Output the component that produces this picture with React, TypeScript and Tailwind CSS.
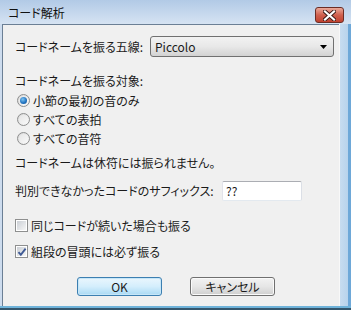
import React from "react";

const font = "[font-family:'Noto_Sans_CJK_JP','Noto_Sans',sans-serif] [font-feature-settings:'palt']";

const Radio = ({ checked }: { checked?: boolean }) => (
  <span className="relative flex h-[13px] w-[13px] items-center justify-center rounded-full border border-[#8e8f8f] bg-gradient-to-br from-[#d6d6d6] to-[#fbfbfb]">
    <span className="h-[9px] w-[9px] rounded-full bg-gradient-to-br from-[#e6e6e6] to-[#f8f8f8] flex items-center justify-center">
      {checked && (
        <span className="h-[7px] w-[7px] rounded-full bg-[radial-gradient(circle_at_40%_35%,#7cc4f2,#1e6fbd_60%,#0d4f8f)]" />
      )}
    </span>
  </span>
);

const Check = ({ checked }: { checked?: boolean }) => (
  <span className="relative flex h-[13px] w-[13px] items-center justify-center border border-[#8e8f8f] bg-white">
    <span className="h-[9px] w-[9px] bg-gradient-to-br from-[#cbcfd5] to-[#f6f6f6]" />
    {checked && (
      <svg className="absolute left-[1px] top-[1px]" width="10" height="10" viewBox="0 0 10 10">
        <path d="M1.5 5.2 L3.8 7.8 L8.6 1.6" fill="none" stroke="#3f5a95" strokeWidth="1.9" />
      </svg>
    )}
  </span>
);

export default function App() {
  return (
    <div className={`w-[351px] h-[310px] flex flex-col bg-[#c3d7ec] text-[12px] text-[#1a1a1a] ${font}`}>
      {/* Title bar */}
      <div className="h-[24px] flex items-start bg-gradient-to-b from-[#b2cae6] to-[#d6e3f2]">
        <span className="ml-[8px] mt-[5px] text-[12px] leading-[16px] text-[#111]">コード解析</span>
        <div className="ml-auto mr-[7px] mt-[7px] flex h-[16px] w-[29px] items-center justify-center rounded-[3px] border border-[#6b2d25] bg-gradient-to-b from-[#e9a99a] via-[#d0604e] to-[#c0412f]">
          <svg width="13" height="11" viewBox="0 0 13 11">
            <path d="M2 1.5 L11 9.5 M11 1.5 L2 9.5" stroke="#3a1a16" strokeWidth="4" strokeLinecap="square" />
            <path d="M2 1.5 L11 9.5 M11 1.5 L2 9.5" stroke="#ffffff" strokeWidth="2.2" strokeLinecap="square" />
          </svg>
        </div>
      </div>

      <div className="flex flex-1">
        <div className="w-[2px] bg-[#cddcee]" />
        {/* Client area */}
        <div className="flex-1 flex flex-col border-l border-t border-[#6b7f95] bg-[#f0f0f0] pl-[12px] leading-[16px]">
          <div className="mt-[11px] flex h-[21px] items-center">
            <span className="w-[135px]">コードネームを振る五線:</span>
            <div className="flex h-[21px] w-[184px] items-center rounded-[3px] border border-[#707070] bg-gradient-to-b from-[#f2f2f2] via-[#e8e8e8] to-[#d2d2d2] pl-[4px] pr-[6px]">
              <span className="flex-1">Piccolo</span>
              <svg width="7" height="4" viewBox="0 0 7 4">
                <path d="M0 0 H7 L3.5 4 Z" fill="#000" />
              </svg>
            </div>
          </div>

          <div className="mt-[16px] h-[16px]">コードネームを振る対象:</div>

          <div className="mt-[2px] flex h-[19px] items-center gap-[3px] pl-[2px]">
            <Radio checked />
            <span>小節の最初の音のみ</span>
          </div>
          <div className="flex h-[19px] items-center gap-[3px] pl-[2px]">
            <Radio />
            <span>すべての表拍</span>
          </div>
          <div className="flex h-[19px] items-center gap-[3px] pl-[2px]">
            <Radio />
            <span>すべての音符</span>
          </div>

          <div className="mt-[7px] h-[16px]">コードネームは休符には振られません。</div>

          <div className="mt-[10px] flex h-[20px] items-center">
            <span className="w-[207px]">判別できなかったコードのサフィックス:</span>
            <div className="flex h-[20px] w-[80px] items-start rounded-[2px] border border-[#abadb3] border-b-[#e3e9ef] border-l-[#e2e3ea] border-r-[#dbdfe6] bg-white pl-[3px] pt-[1px]">
              ??
            </div>
          </div>

          <div className="mt-[15px] flex h-[19px] items-center gap-[3px]">
            <Check />
            <span>同じコードが続いた場合も振る</span>
          </div>
          <div className="mt-[7px] flex h-[19px] items-center gap-[3px]">
            <Check checked />
            <span>組段の冒頭には必ず振る</span>
          </div>

          <div className="mt-[16px] flex gap-[28px] pl-[62px]">
            <button className="h-[19px] w-[85px] rounded-[3px] border border-[#3c7fb1] bg-gradient-to-b from-[#eaf6fd] via-[#d4eefc] to-[#a9d9f4] leading-[16px] shadow-[inset_0_0_0_1px_#c6e6f8]">
              OK
            </button>
            <button className="h-[19px] w-[85px] rounded-[3px] border border-[#707070] bg-gradient-to-b from-[#f2f2f2] via-[#e6e6e6] to-[#cfcfcf] leading-[16px] shadow-[inset_0_0_0_1px_#fafafa]">
              キャンセル
            </button>
          </div>
        </div>
        <div className="w-[12px] flex border-l border-[#f8f8f8]">
          <div className="flex-1 bg-gradient-to-r from-[#c7dcf0] to-[#b8d3ec]" />
          <div className="w-[3px] bg-[#6ea8d8]" />
        </div>
      </div>
      <div className="h-[4px] flex flex-col">
        <div className="h-[2px] bg-[#6fb3da]" />
        <div className="h-[2px] bg-[#34566c]" />
      </div>
    </div>
  );
}
